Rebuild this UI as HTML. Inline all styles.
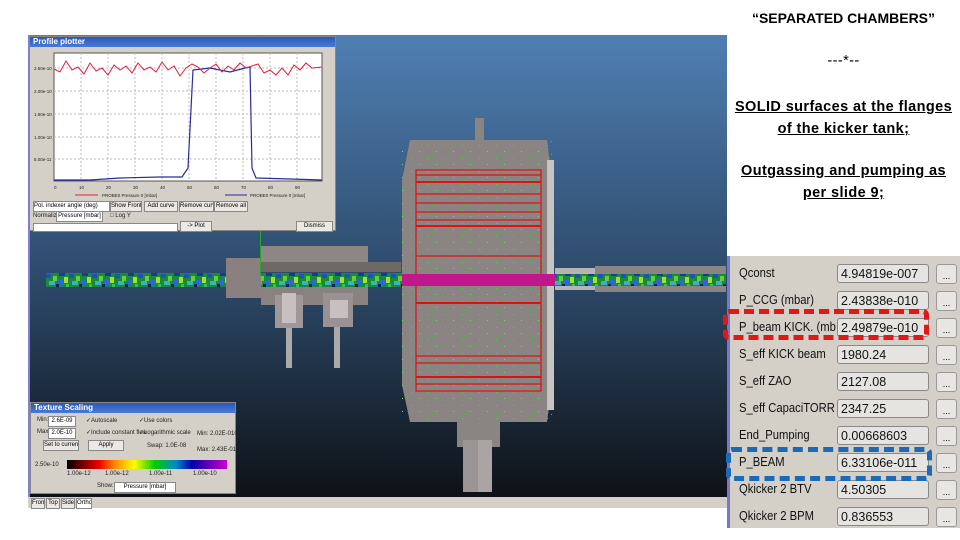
<!DOCTYPE html>
<html><head><meta charset="utf-8"><style>
body{margin:0;width:960px;height:540px;background:#fff;position:relative;overflow:hidden;font-family:"Liberation Sans",sans-serif}
.abs{position:absolute}
.title{position:absolute;left:727px;width:233px;text-align:center;font-family:"Liberation Sans",sans-serif;font-weight:bold;font-size:14.5px;letter-spacing:0.4px;color:#000;white-space:nowrap}
.u{text-decoration:underline}
#panel{position:absolute;left:727px;top:256px;width:233px;height:272px;background:#d4d0c8;border-left:3px solid #7878c8;box-sizing:border-box}
.row{position:absolute;left:9px;font-size:12.5px;color:#111;transform:scaleX(0.9);transform-origin:left;white-space:nowrap}
.val{position:absolute;left:107px;width:92px;height:19px;background:#e6e4e0;border:1px solid #888;border-radius:3px;box-sizing:border-box;font-size:12.5px;line-height:18px;padding-left:3px;color:#111}
.btn{position:absolute;left:206px;width:21px;height:20px;background:#e8e6e2;border:1px solid #999;border-radius:3px;box-sizing:border-box;font-size:9px;text-align:center;line-height:22px}
.win{position:absolute;background:#d4d0c8;border:1px solid #888;box-sizing:border-box}
.tb{background:linear-gradient(#2a58b8,#4a7ad8);color:#fff;font-size:8px;font-weight:bold;height:10px;line-height:10px;padding-left:3px}
.sm{font-size:6px;color:#222;position:absolute;white-space:nowrap}
.sb{position:absolute;background:#ece9e4;border:1px solid #888;font-size:6px;text-align:center;line-height:9px;height:9px;white-space:nowrap;overflow:hidden}
</style></head><body>

<div class="title" style="top:10px;font-size:14px;letter-spacing:0">“SEPARATED CHAMBERS”</div>
<div class="title" style="top:53px;font-weight:normal">---*--</div>
<div class="title u" style="top:96px;line-height:22px">SOLID surfaces at the flanges<br>of the kicker tank;</div>
<div class="title u" style="top:160px;line-height:22px">Outgassing and pumping as<br>per slide 9;</div>

<svg class="abs" style="left:28px;top:35px" width="699" height="473" viewBox="28 35 699 473">
<defs>
<linearGradient id="bg" x1="0" y1="0" x2="0" y2="1"><stop offset="0" stop-color="#4f7fb2"/><stop offset="0.5" stop-color="#2e4b6c"/><stop offset="1" stop-color="#0c0f12"/></linearGradient>
<pattern id="nz" width="23" height="14" patternUnits="userSpaceOnUse" y="273">
<rect width="23" height="14" fill="#1a8a3a"/>
<rect x="0" y="1" width="5" height="4" fill="#2050c0"/><rect x="7" y="3" width="4" height="5" fill="#60d040"/>
<rect x="13" y="0" width="6" height="3" fill="#1838a0"/><rect x="3" y="8" width="6" height="4" fill="#40b0c0"/>
<rect x="12" y="7" width="5" height="5" fill="#2868d8"/><rect x="18" y="4" width="4" height="6" fill="#a0e030"/>
<rect x="10" y="11" width="3" height="3" fill="#0a2060"/><rect x="20" y="11" width="3" height="3" fill="#30c060"/>
</pattern>
<pattern id="dots" width="17" height="13" patternUnits="userSpaceOnUse"><rect x="3" y="2" width="1" height="1" fill="#5c5"/><rect x="11" y="8" width="1" height="1" fill="#6d6"/><rect x="7" y="11" width="1" height="1" fill="#4b4"/></pattern>
</defs>
<rect x="28" y="35" width="699" height="473" fill="url(#bg)"/>
<rect x="28" y="35" width="2" height="462" fill="#8080d0"/>
<rect x="46" y="273" width="356" height="14" fill="url(#nz)"/>
<rect x="226" y="258" width="35" height="40" fill="#8a8080"/>
<rect x="261" y="246" width="107" height="16" fill="#8e8684"/>
<rect x="261" y="262" width="140" height="10" fill="#6e6866"/>
<rect x="261" y="287" width="107" height="18" fill="#8a8280"/>
<rect x="275" y="295" width="28" height="33" fill="#a09898"/><rect x="282" y="293" width="14" height="30" fill="#c8c0c0"/>
<rect x="286" y="328" width="6" height="40" fill="#aaa"/>
<rect x="323" y="293" width="30" height="34" fill="#9a9292"/><rect x="330" y="300" width="18" height="18" fill="#c8c0c0"/>
<rect x="334" y="327" width="6" height="41" fill="#aaa"/>
<rect x="260" y="35" width="1" height="240" fill="#2a2"/>
<path d="M410 140 L547 140 L552 180 L552 385 L547 422 L410 422 L402 385 L402 180 Z" fill="#8a8482"/>
<rect x="402" y="140" width="150" height="282" fill="url(#dots)"/>
<rect x="547" y="160" width="7" height="250" fill="#c8c4c4"/>
<rect x="475" y="118" width="9" height="22" fill="#8a8482"/>
<rect x="457" y="422" width="43" height="25" fill="#8a8482"/>
<rect x="463" y="440" width="29" height="52" fill="#9a9494"/><rect x="478" y="440" width="14" height="52" fill="#aaa4a4"/>
<g fill="none" stroke="#e01010" stroke-width="1.2">
<rect x="416" y="170" width="125" height="221"/>
<line x1="416" y1="175" x2="541" y2="175"/><line x1="416" y1="182" x2="541" y2="182" stroke-width="2"/>
<line x1="416" y1="194" x2="541" y2="194"/><line x1="416" y1="203" x2="541" y2="203"/>
<line x1="416" y1="212" x2="541" y2="212"/><line x1="416" y1="220" x2="541" y2="220"/>
<line x1="416" y1="226" x2="541" y2="226" stroke-width="2"/><line x1="416" y1="256" x2="541" y2="256"/>
<line x1="416" y1="303" x2="541" y2="303" stroke-width="2"/><line x1="416" y1="356" x2="541" y2="356"/>
<line x1="416" y1="363" x2="541" y2="363"/><line x1="416" y1="377" x2="541" y2="377" stroke-width="2"/>
<line x1="416" y1="384" x2="541" y2="384"/>
</g>
<rect x="402" y="274" width="153" height="12" fill="#c0188c"/>
<rect x="555" y="268" width="40" height="22" fill="#b8b4b4"/>
<rect x="595" y="266" width="131" height="26" fill="#8a8482"/>
<rect x="555" y="274" width="171" height="12" fill="url(#nz)"/>
<rect x="28" y="497" width="699" height="11" fill="#d4d0c8"/>
</svg>
<div class="sb" style="left:31px;top:498px;width:12px">Front</div>
<div class="sb" style="left:46px;top:498px;width:12px">Top</div>
<div class="sb" style="left:61px;top:498px;width:12px">Side</div>
<div class="sb" style="left:76px;top:498px;width:14px;background:#fff">Ortho</div>

<div class="win" style="left:29px;top:36px;width:307px;height:195px">
<div class="tb">Profile plotter</div>
<svg class="abs" style="left:0;top:11px" width="305" height="150">
<rect x="24" y="5" width="268" height="128" fill="#fff" stroke="#555"/>
<g stroke="#bbb" stroke-dasharray="2,2"><line x1="51" y1="5" x2="51" y2="133"/><line x1="78" y1="5" x2="78" y2="133"/><line x1="105" y1="5" x2="105" y2="133"/><line x1="132" y1="5" x2="132" y2="133"/><line x1="159" y1="5" x2="159" y2="133"/><line x1="186" y1="5" x2="186" y2="133"/><line x1="213" y1="5" x2="213" y2="133"/><line x1="240" y1="5" x2="240" y2="133"/><line x1="267" y1="5" x2="267" y2="133"/>
<line x1="24" y1="20" x2="292" y2="20"/><line x1="24" y1="43" x2="292" y2="43"/><line x1="24" y1="66" x2="292" y2="66"/><line x1="24" y1="89" x2="292" y2="89"/><line x1="24" y1="111" x2="292" y2="111"/></g>
<polyline fill="none" stroke="#2a2aa0" stroke-width="1.2" points="24,132 60,132 90,130 130,129 152,129 158,120 163,22 180,20 200,24 215,20 220,19 222,120 226,130 260,131 292,132"/>
<polyline fill="none" stroke="#e02040" stroke-width="1" points="24,21 30,24 36,13 42,22 48,19 54,26 60,15 66,23 72,20 78,27 84,17 90,22 96,18 102,25 108,15 114,22 120,19 126,24 132,14 138,22 144,18 150,28 156,20 162,16 168,19 174,25 180,20 186,16 192,24 198,18 204,22 210,15 216,20 222,18 228,16 234,25 240,22 246,27 252,20 258,27 264,17 270,22 276,15 282,20 292,19"/>
<g font-size="4.5" fill="#222"><text x="4" y="22">2.50e-10</text><text x="4" y="45">2.00e-10</text><text x="4" y="68">1.50e-10</text><text x="4" y="91">1.00e-10</text><text x="4" y="113">5.00e-11</text>
<text x="24" y="141">0</text><text x="49" y="141">10</text><text x="76" y="141">20</text><text x="103" y="141">30</text><text x="130" y="141">40</text><text x="157" y="141">50</text><text x="184" y="141">60</text><text x="211" y="141">70</text><text x="238" y="141">80</text><text x="265" y="141">90</text>
<text x="72" y="149">PROBE0 Pressure 0 [mbar]</text><text x="220" y="149">PROBE0 Pressure 0 [mbar]</text></g>
<line x1="45" y1="147" x2="68" y2="147" stroke="#e02040"/><line x1="195" y1="147" x2="217" y2="147" stroke="#2a2aa0"/>
</svg>
<div class="sb" style="left:3px;top:164px;width:75px;background:#fff;text-align:left">Pol. indexer angle (deg)</div>
<div class="sb" style="left:80px;top:164px;width:30px">Show Front</div>
<div class="sb" style="left:114px;top:164px;width:32px">Add curve</div>
<div class="sb" style="left:149px;top:164px;width:33px">Remove curve</div>
<div class="sb" style="left:184px;top:164px;width:32px">Remove all</div>
<span class="sm" style="left:3px;top:176px">Normalize:</span>
<div class="sb" style="left:26px;top:174px;width:45px;background:#fff">Pressure [mbar]</div>
<span class="sm" style="left:80px;top:176px">□ Log Y</span>
<div style="position:absolute;left:3px;top:186px;width:143px;height:7px;background:#fff;border:1px solid #888"></div>
<div class="sb" style="left:150px;top:184px;width:30px">-&gt; Plot</div>
<div class="sb" style="left:266px;top:184px;width:35px">Dismiss</div>
</div>

<div class="win" style="left:30px;top:402px;width:206px;height:92px">
<div class="tb">Texture Scaling</div>
<span class="sm" style="left:6px;top:14px">Min:</span><div class="sb" style="left:17px;top:13px;width:26px;background:#fff">2.6E-09</div>
<span class="sm" style="left:6px;top:26px">Max:</span><div class="sb" style="left:17px;top:25px;width:26px;background:#fff">2.0E-10</div>
<span class="sm" style="left:55px;top:14px">✓Autoscale</span><span class="sm" style="left:55px;top:26px">✓Include constant flow</span>
<span class="sm" style="left:108px;top:14px">✓Use colors</span><span class="sm" style="left:108px;top:26px">✓Logarithmic scale</span>
<div class="sb" style="left:12px;top:37px;width:34px">Set to current</div><div class="sb" style="left:57px;top:37px;width:34px">Apply</div>
<span class="sm" style="left:116px;top:40px">Swap: 1.0E-08</span>
<span class="sm" style="left:166px;top:28px">Min: 2.02E-010</span><span class="sm" style="left:166px;top:44px">Max: 2.43E-010</span>
<span class="sm" style="left:4px;top:59px">2.50e-10</span>
<div style="position:absolute;left:36px;top:57px;width:160px;height:9px;background:linear-gradient(90deg,#000,#e00 20%,#f80 30%,#ff0 42%,#0c0 55%,#08c 68%,#00a 78%,#c0c)"></div>
<span class="sm" style="left:36px;top:68px">1.00e-12</span><span class="sm" style="left:74px;top:68px">1.00e-12</span><span class="sm" style="left:118px;top:68px">1.00e-11</span><span class="sm" style="left:162px;top:68px">1.00e-10</span>
<span class="sm" style="left:66px;top:80px">Show:</span><div class="sb" style="left:83px;top:79px;width:60px;background:#fff">Pressure [mbar]</div>
</div>

<div id="panel">
<div class="row" style="top:10px">Qconst</div><div class="val" style="top:8px">4.94819e-007</div><div class="btn" style="top:8px">...</div>
<div class="row" style="top:37px">P_CCG (mbar)</div><div class="val" style="top:35px">2.43838e-010</div><div class="btn" style="top:35px">...</div>
<div class="row" style="top:64px">P_beam KICK. (mb</div><div class="val" style="top:62px">2.49879e-010</div><div class="btn" style="top:62px">...</div>
<div class="row" style="top:91px">S_eff KICK beam</div><div class="val" style="top:89px">1980.24</div><div class="btn" style="top:89px">...</div>
<div class="row" style="top:118px">S_eff ZAO</div><div class="val" style="top:116px">2127.08</div><div class="btn" style="top:116px">...</div>
<div class="row" style="top:145px">S_eff CapaciTORR</div><div class="val" style="top:143px">2347.25</div><div class="btn" style="top:143px">...</div>
<div class="row" style="top:172px">End_Pumping</div><div class="val" style="top:170px">0.00668603</div><div class="btn" style="top:170px">...</div>
<div class="row" style="top:199px">P_BEAM</div><div class="val" style="top:197px">6.33106e-011</div><div class="btn" style="top:197px">...</div>
<div class="row" style="top:226px">Qkicker 2 BTV</div><div class="val" style="top:224px">4.50305</div><div class="btn" style="top:224px">...</div>
<div class="row" style="top:253px">Qkicker 2 BPM</div><div class="val" style="top:251px">0.836553</div><div class="btn" style="top:251px">...</div>
</div>
<div class="abs" style="left:723px;top:309px;width:206px;height:31px;border:5px dashed #e01818;border-radius:6px;box-sizing:border-box"></div>
<div class="abs" style="left:726px;top:447px;width:206px;height:34px;border:5px dashed #1a6ab8;border-radius:6px;box-sizing:border-box"></div>
</body></html>
